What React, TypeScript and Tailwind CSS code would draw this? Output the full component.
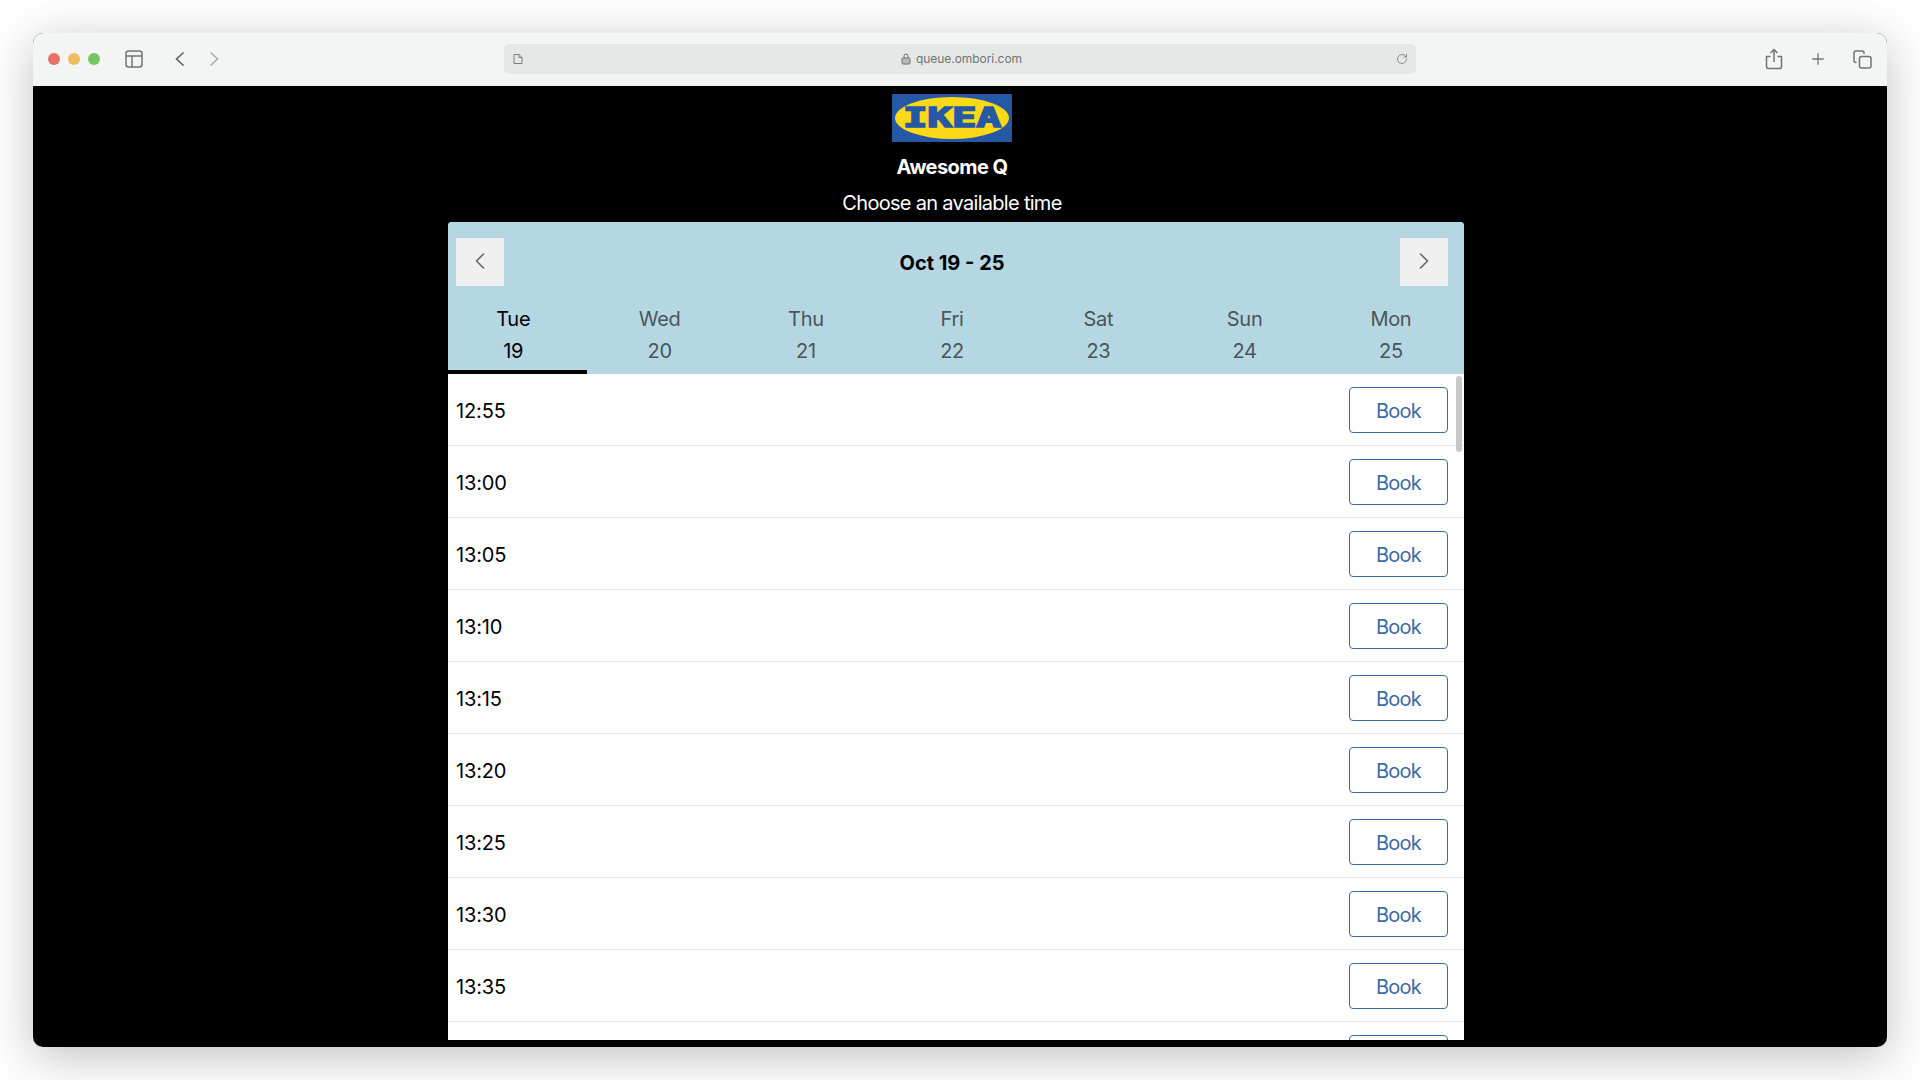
import { ChevronLeft, ChevronRight, Plus, RotateCw } from "lucide-react";

const days = [
  { name: "Wed", date: 20 },
  { name: "Thu", date: 21 },
  { name: "Fri", date: 22 },
  { name: "Sat", date: 23 },
  { name: "Sun", date: 24 },
  { name: "Mon", date: 25 },
];

const times = ["12:55", "13:00", "13:05", "13:10", "13:15", "13:20", "13:25", "13:30", "13:35", ""];

function IkeaLogo() {
  return (
    <svg width="120" height="48" viewBox="0 0 120 48" className="block">
      <rect width="120" height="48" fill="#2558a6" />
      <ellipse cx="60" cy="24" rx="57" ry="21" fill="#fbd914" />
      <text
        x="60"
        y="33"
        textAnchor="middle"
        textLength="98"
        lengthAdjust="spacingAndGlyphs"
        fontFamily="'DejaVu Sans Mono', monospace"
        fontWeight="700"
        fontSize="26"
        fill="#2558a6"
        stroke="#2558a6"
        strokeWidth="1.6"
      >
        IKEA
      </text>
    </svg>
  );
}

function Toolbar() {
  return (
    <div className="flex h-[53px] shrink-0 items-center bg-[#f3f5f4] pb-px text-[#6f7271]">
      <div className="ml-[15px] flex gap-2">
        <span className="h-3 w-3 rounded-full bg-[#e57368]" />
        <span className="h-3 w-3 rounded-full bg-[#eebb5e]" />
        <span className="h-3 w-3 rounded-full bg-[#78c663]" />
      </div>
      <svg width="18" height="18" viewBox="0 0 18 18" fill="none" stroke="#717473" strokeWidth="1.5" className="ml-[25px]">
        <rect x="1" y="1" width="16" height="16" rx="2.5" />
        <path d="M1 6h16M7 6v11" />
      </svg>
      <svg width="12" height="16" viewBox="0 0 12 16" fill="none" stroke="#626564" strokeWidth="1.7" className="ml-[31px]">
        <path d="M9.5 1.5 2.5 8l7 6.5" />
      </svg>
      <svg width="12" height="16" viewBox="0 0 12 16" fill="none" stroke="#aeb0af" strokeWidth="1.7" className="ml-[22px]">
        <path d="M2.5 1.5 9.500 8l-7 6.500" />
      </svg>
      <div className="ml-[284px] flex h-[30px] w-[912px] items-center rounded-[5px] bg-[#e6e8e7] pl-[9px] pr-[8px]">
        <svg width="10" height="12" viewBox="0 0 10 12" fill="none" stroke="#7b7e7d" strokeWidth="1">
          <path d="M1 1.500h5l3 3v6h-8zM6 1.500v3h3" />
        </svg>
        <div className="flex flex-1 items-center justify-center gap-[5px] pl-[4px] font-['Inter',sans-serif] text-[12px] leading-none tracking-[-0.05px] text-[#717473]">
          <svg width="10" height="12" viewBox="0 0 10 12" fill="none" stroke="#6f7271" strokeWidth="1">
            <rect x="1" y="5" width="8" height="6" rx="1" fill="#b9bbba" />
            <path d="M3 5V3a2 2 0 0 1 4 0v2" />
          </svg>
          queue.ombori.com
        </div>
        <RotateCw size={12} strokeWidth={1.5} className="text-[#6f7271]" />
      </div>
      <svg width="18" height="22" viewBox="0 0 18 22" fill="none" stroke="#717473" strokeWidth="1.5" className="ml-[349px]">
        <path d="M9 14V2M5.500 5 9 1.500 12.500 5M5.500 8.500H1.500v10a2 2 0 0 0 2 2h11a2 2 0 0 0 2-2v-10h-4" />
      </svg>
      <Plus size={18} strokeWidth={1.7} className="ml-[26px] text-[#717473]" />
      <svg width="19" height="19" viewBox="0 0 19 19" fill="none" stroke="#717473" strokeWidth="1.5" className="ml-[26px]">
        <rect x="6.500" y="6.500" width="11.500" height="11.500" rx="2" />
        <path d="M3.500 12.500h-.5a2 2 0 0 1-2-2V3a2 2 0 0 1 2-2h6a2 2 0 0 1 2 2v1" />
      </svg>
    </div>
  );
}

function Scheduler() {
  return (
    <div className="relative ml-[415px] flex h-[818px] w-[1016px] flex-col overflow-hidden rounded-t-[4px] bg-white">
      <div className="shrink-0 bg-[#b5d7e3]">
        <div className="flex items-center justify-between pl-2 pr-4 pt-4">
          <button className="flex h-12 w-12 items-center justify-center bg-[#f0f0f0] pb-[2px] text-[#666666]">
            <ChevronLeft size={28} strokeWidth={1.4} />
          </button>
          <div className="pt-px text-[20px] font-bold leading-none text-black">Oct 19 - 25</div>
          <button className="flex h-12 w-12 items-center justify-center bg-[#f0f0f0] pb-[2px] text-[#666666]">
            <ChevronRight size={28} strokeWidth={1.4} />
          </button>
        </div>
        <div className="flex text-center text-[20px] leading-8 tracking-[-0.3px] text-[#4a555a]">
          <div className="h-[88px] w-[138.5px] border-b-4 border-black pr-2 pt-[17px] text-black">
            <div>Tue</div>
            <div>19</div>
          </div>
          {days.map((day) => (
            <div key={day.name} className="h-[88px] w-[146.25px] pt-[17px]">
              <div>{day.name}</div>
              <div>{day.date}</div>
            </div>
          ))}
        </div>
      </div>
      <div className="flex-1 overflow-hidden">
        {times.map((time) => (
          <div key={time} className="flex h-[72px] items-center justify-between border-b border-[#e8e8e8] pl-2 pr-4 text-[20px]">
            <span className="pt-[2px] tracking-[-0.15px] text-black">{time}</span>
            <button className="h-[46px] w-[99px] rounded-[4px] border border-[#3a6aa8] pt-[2px] tracking-[-0.8px] text-[#3a6aa8]">
              {time && "Book"}
            </button>
          </div>
        ))}
      </div>
      {/* scrollbar thumb */}
      <div className="absolute right-[2px] top-[154px] h-[76px] w-[6px] rounded-full bg-[#c8c8c8]" />
    </div>
  );
}

export default function App() {
  return (
    <div className="min-h-screen bg-white p-[33px] font-['Inter',sans-serif]">
      <div className="flex h-[1014px] w-[1854px] flex-col overflow-hidden rounded-[10px] bg-black shadow-[0_10px_50px_rgba(0,0,0,0.25)]">
        <Toolbar />
        <div className="flex flex-col">
          <div className="ml-[415px] flex h-[136px] w-[1016px] flex-col items-center pr-2 pt-2 text-[20px] text-white">
            <IkeaLogo />
            <div className="mt-[10px] font-bold leading-[30px] tracking-[-0.55px]">Awesome Q</div>
            <div className="mt-[6px] leading-[30px] tracking-[-0.7px]">Choose an available time</div>
          </div>
          <Scheduler />
        </div>
      </div>
    </div>
  );
}
